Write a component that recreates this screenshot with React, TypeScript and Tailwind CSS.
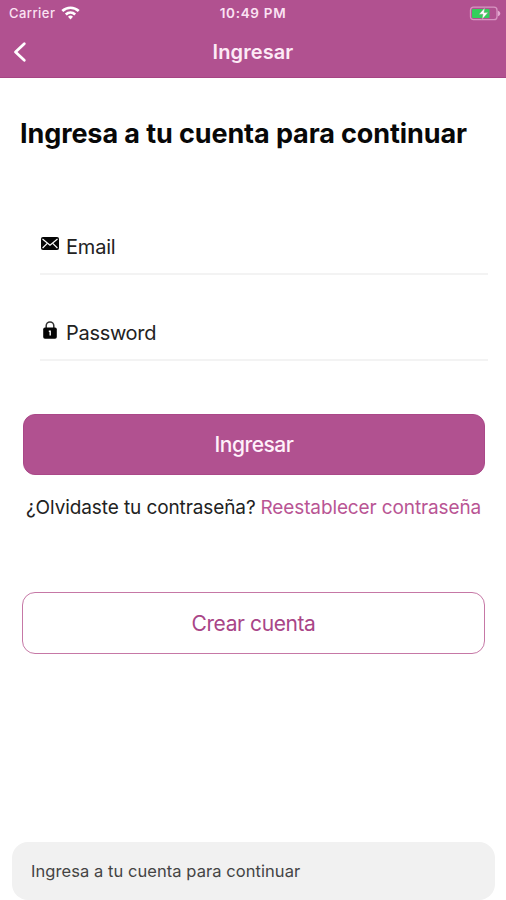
import type { ReactNode } from "react";

function StatusBar() {
  return (
    <div className="grid h-[26px] grid-cols-3 items-center text-[13px] leading-[26px] text-[#fbe3f3]">
      <div className="flex items-center gap-[6px] pl-[9px]">
        <span className="font-medium tracking-[0.45px]">Carrier</span>
        <svg className="-mt-px h-[14px] w-[19px]" viewBox="0 0 19 14" fill="none" stroke="#fff" strokeWidth="2.7">
          <path d="M1.3 5.1C6 .6 13 .6 17.7 5.1" />
          <path d="M4.8 8.5c2.8-2.5 6.6-2.5 9.4 0" />
          <path d="M7 10.7c1.6-1.5 3.4-1.5 5 0L9.5 13.6z" fill="#fff" stroke="none" />
        </svg>
      </div>
      <span className="text-center text-[13.5px] font-semibold tracking-[0.7px]">10:49 PM</span>
      <svg className="mr-[5px] h-[15px] w-[32px] justify-self-end" viewBox="0 0 32 15">
        <rect x="1.5" y="1.2" width="26.5" height="12.5" rx="3" fill="none" stroke="#d795c2" strokeWidth="1.3" />
        <path d="M28.8 4.5c1.6.8 2.5 1.8 2.5 3s-.9 2.2-2.5 3z" fill="#e3a9d0" />
        <rect x="3" y="3" width="17.5" height="9" rx="1" fill="#32cf5b" />
        <path d="M15.8 1.8 10 8.2h4l-1 5.2 6-6.8h-4z" fill="#fff" stroke="#8b9980" strokeWidth=".5" />
      </svg>
    </div>
  );
}

function Field({ icon, label, tracking }: { icon: ReactNode; label: string; tracking: string }) {
  return (
    <div className="flex h-[55px] items-center border-b-2 border-[#f3f3f3]">
      <div className="flex w-[26px] shrink-0">{icon}</div>
      <span className={`text-[20px] leading-6 text-[#222] ${tracking}`}>{label}</span>
    </div>
  );
}

const mail = (
  <svg className="mb-[6px] ml-px h-[13px] w-[18px]" viewBox="0 0 18 13">
    <rect width="18" height="13" rx="2" fill="#050505" />
    <path d="M1.5 2 9 8.2 16.5 2M1.6 11 6 6.6M16.4 11 12 6.6" fill="none" stroke="#fff" strokeWidth="1.2" />
  </svg>
);

const lock = (
  <svg className="mb-[6px] ml-[3px] h-[18px] w-[14px]" viewBox="0 0 14 18">
    <path d="M3.2 7V4.7a3.8 3.8 0 0 1 7.6 0V7" fill="none" stroke="#333" strokeWidth="1.5" />
    <rect x=".2" y="6.5" width="13.6" height="11.3" rx="1.8" fill="#050505" />
    <path d="M5.8 9.5h2.1v5H6.5V11h-.7z" fill="#fff" />
  </svg>
);

export default function App() {
  return (
    <div className="flex h-[900px] w-[506px] flex-col overflow-hidden bg-white font-['Inter',sans-serif]">
      <header className="h-[78px] shrink-0 border-b border-[#a64583] bg-[#b15190]">
        <StatusBar />
        <div className="grid h-[51px] grid-cols-[1fr_auto_1fr] items-center">
          <svg className="ml-[13px] h-[22px] w-[14px]" viewBox="0 0 14 22" fill="none" stroke="#fff" strokeWidth="2.8" strokeLinecap="round" strokeLinejoin="round">
            <path d="M11.3 2.8 2.5 11l8.8 8.2" />
          </svg>
          <h1 className="text-[20px] font-semibold leading-6 tracking-[0.1px] text-[#fdeaf6]">Ingresar</h1>
        </div>
      </header>
      <main className="flex flex-1 flex-col">
        <h2 className="ml-5 mt-[40px] whitespace-nowrap text-[27px] font-bold leading-8 tracking-[-0.1px] text-[#080808]">
          Ingresa a tu cuenta para continuar
        </h2>
        <form className="ml-10 mr-[18px] mt-[70px] flex flex-col gap-[31px]">
          <Field icon={mail} label="Email" tracking="tracking-[-0.2px]" />
          <Field icon={lock} label="Password" tracking="tracking-[-0.3px]" />
        </form>
        <button className="ml-[23px] mt-[53px] h-[61px] w-[462px] rounded-xl border border-[#aa4888] bg-[#b15190] text-[21px] font-medium tracking-[-0.5px] text-[#fff0fa]">
          Ingresar
        </button>
        <p className="ml-[26px] mt-[21px] flex gap-[5px] whitespace-nowrap text-[19px] leading-6 tracking-[-0.1px] text-[#222]">
          <span>¿Olvidaste tu contraseña?</span>
          <a className="tracking-[-0.12px] text-[#b95594]">Reestablecer contraseña</a>
        </p>
        <button className="ml-[22px] mt-[72px] h-[62px] w-[463px] rounded-[13px] border border-[#c678a6] bg-white pt-0.5 text-[21px] tracking-[-0.4px] text-[#a94587]">
          Crear cuenta
        </button>
      </main>
      <footer className="ml-[12px] flex h-[58px] w-[483px] shrink-0 items-center rounded-2xl bg-[#f1f1f1] pl-[19px] pt-px text-[16.5px] tracking-[0.06px] text-[#444]">
        Ingresa a tu cuenta para continuar
      </footer>
    </div>
  );
}
